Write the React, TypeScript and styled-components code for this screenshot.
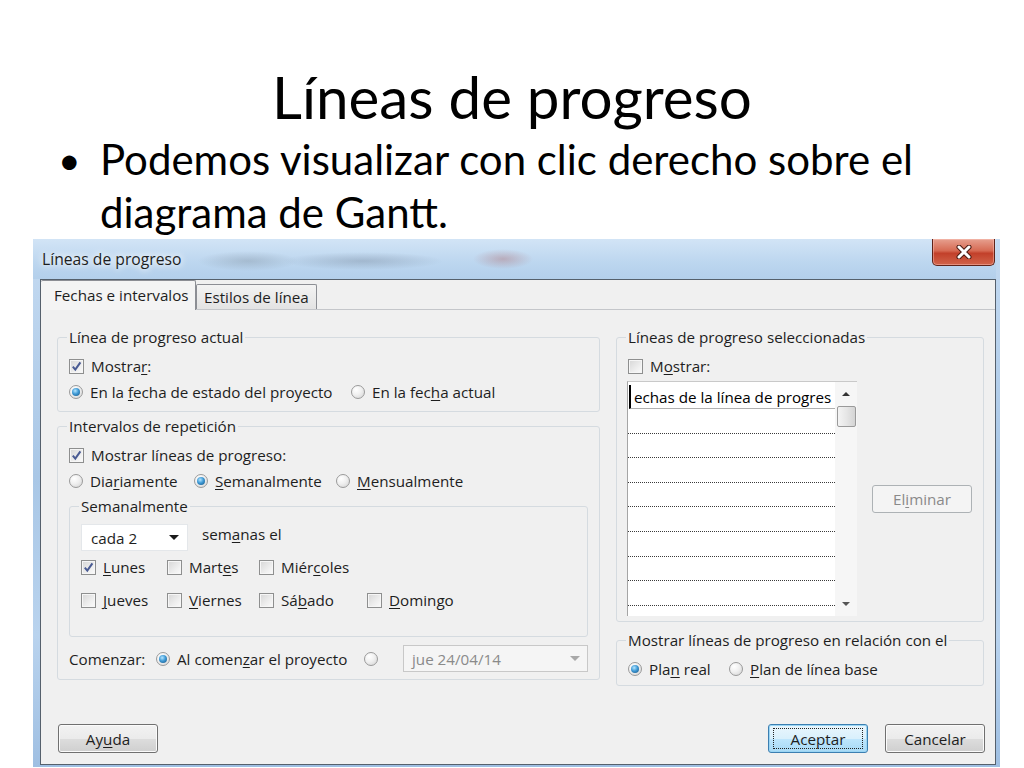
import React from "react";
import styled, {createGlobalStyle, css} from "styled-components";

const GlobalStyle = createGlobalStyle`
  html, body {
    margin: 0;
    padding: 0;
    background: #ffffff;
  }
  body {
    width: 1024px;
    height: 768px;
    overflow: hidden;
    font-family: "Open Sans", "Noto Sans", sans-serif;
  }
`;

const ui = css`
  font-family: "Open Sans", "Noto Sans", sans-serif;
  font-size: 15.2px;
  color: #1e1e1e;
`;

const Chk: React.FC<{on?: boolean}> = ({on}) => (
  <StyledCheckBox>
    {on && (
      <svg width="11" height="11" viewBox="0 0 11 11">
        <path d="M1.8 5.6 L4.3 8.6 L9.4 1.4" fill="none" stroke="#4a5b93" strokeWidth="2" />
      </svg>
    )}
  </StyledCheckBox>
);

const Radio: React.FC<{on?: boolean}> = ({on}) => <StyledRadio $on={on} />;

const ListLines = [0, 1, 2, 3, 4, 5, 6, 7, 8];

const App: React.FC = () => {
  return (
    <>
      <GlobalStyle />
      <StyledSlide>
        <StyledSlideTitle>Líneas de progreso</StyledSlideTitle>
        <StyledBulletItem>
          <StyledBullet>•</StyledBullet>
          <StyledBulletText>
            Podemos visualizar con clic derecho sobre el diagrama de Gantt.
          </StyledBulletText>
        </StyledBulletItem>
      </StyledSlide>

      <StyledDialog>
        <StyledTitleBar>
          <StyledWindowTitle>Líneas de progreso</StyledWindowTitle>
          <StyledCloseButton>
            <svg width="18" height="14" viewBox="0 0 18 14">
              <path
                d="M4 2 L14 12 M14 2 L4 12"
                stroke="#4a1a12"
                strokeWidth="5"
                strokeLinecap="round"
              />
              <path
                d="M4 2 L14 12 M14 2 L4 12"
                stroke="#ffffff"
                strokeWidth="3"
                strokeLinecap="round"
              />
            </svg>
          </StyledCloseButton>
        </StyledTitleBar>

        <StyledClient>
          <StyledTabStrip>
            <StyledTab $active>Fechas e intervalos</StyledTab>
            <StyledTab>Estilos de línea</StyledTab>
          </StyledTabStrip>

          <StyledTabPanel>
            <StyledColumn $gap={4}>
              <StyledGroup $pt={6} $pb={6}>
                <StyledLegend>Línea de progreso actual</StyledLegend>
                <StyledRow>
                  <StyledOption>
                    <Chk on />
                    <span>
                      Mostra<u>r</u>:
                    </span>
                  </StyledOption>
                </StyledRow>
                <StyledRow>
                  <StyledOption $w={282}>
                    <Radio on />
                    <span>
                      En la <u>f</u>echa de estado del proyecto
                    </span>
                  </StyledOption>
                  <StyledOption>
                    <Radio />
                    <span>
                      En la fec<u>h</u>a actual
                    </span>
                  </StyledOption>
                </StyledRow>
              </StyledGroup>

              <StyledGroup $pt={6} $pb={7}>
                <StyledLegend>Intervalos de repetición</StyledLegend>
                <StyledRow>
                  <StyledOption>
                    <Chk on />
                    <span>
                      Mostrar líneas de pro<u>g</u>reso:
                    </span>
                  </StyledOption>
                </StyledRow>
                <StyledRow>
                  <StyledOption $w={125}>
                    <Radio />
                    <span>
                      Dia<u>r</u>iamente
                    </span>
                  </StyledOption>
                  <StyledOption $w={142}>
                    <Radio on />
                    <span>
                      <u>S</u>emanalmente
                    </span>
                  </StyledOption>
                  <StyledOption>
                    <Radio />
                    <span>
                      <u>M</u>ensualmente
                    </span>
                  </StyledOption>
                </StyledRow>

                <StyledInnerGroup $pt={8} $pb={23}>
                  <StyledLegend>Semanalmente</StyledLegend>
                  <StyledComboRow>
                    <StyledCombo>
                      <span>cada 2</span>
                      <StyledArrow />
                    </StyledCombo>
                    <StyledComboLabel>
                      sem<u>a</u>nas el
                    </StyledComboLabel>
                  </StyledComboRow>
                  <StyledDayGrid>
                    <StyledOption>
                      <Chk on />
                      <span>
                        <u>L</u>unes
                      </span>
                    </StyledOption>
                    <StyledOption>
                      <Chk />
                      <span>
                        Mart<u>e</u>s
                      </span>
                    </StyledOption>
                    <StyledOption>
                      <Chk />
                      <span>
                        Miér<u>c</u>oles
                      </span>
                    </StyledOption>
                    <span />
                    <StyledOption>
                      <Chk />
                      <span>
                        <u>J</u>ueves
                      </span>
                    </StyledOption>
                    <StyledOption>
                      <Chk />
                      <span>
                        <u>V</u>iernes
                      </span>
                    </StyledOption>
                    <StyledOption>
                      <Chk />
                      <span>
                        Sá<u>b</u>ado
                      </span>
                    </StyledOption>
                    <StyledOption>
                      <Chk />
                      <span>
                        <u>D</u>omingo
                      </span>
                    </StyledOption>
                  </StyledDayGrid>
                </StyledInnerGroup>

                <StyledStartRow>
                  <StyledOption $w={87}>
                    <span>Comenzar:</span>
                  </StyledOption>
                  <StyledOption $w={208}>
                    <Radio on />
                    <span>
                      Al comen<u>z</u>ar el proyecto
                    </span>
                  </StyledOption>
                  <StyledOption $w={39}>
                    <Radio />
                  </StyledOption>
                  <StyledDateCombo>
                    <span>jue 24/04/14</span>
                    <StyledArrow $disabled />
                  </StyledDateCombo>
                </StyledStartRow>
              </StyledGroup>
            </StyledColumn>

            <StyledColumn $gap={8}>
              <StyledGroup $pt={6} $pb={5}>
                <StyledLegend>Líneas de progreso seleccionadas</StyledLegend>
                <StyledRow>
                  <StyledOption>
                    <Chk />
                    <span>
                      M<u>o</u>strar:
                    </span>
                  </StyledOption>
                </StyledRow>
                <StyledListArea>
                  <StyledListBox>
                    <StyledListRows>
                      <StyledListHead>echas de la línea de progres</StyledListHead>
                      {ListLines.map((n) => (
                        <StyledListRow key={n} />
                      ))}
                    </StyledListRows>
                    <StyledScrollBar>
                      <StyledScrollArrow>
                        <StyledTri $up />
                      </StyledScrollArrow>
                      <StyledThumb />
                      <StyledScrollTrack />
                      <StyledScrollArrow>
                        <StyledTri />
                      </StyledScrollArrow>
                    </StyledScrollBar>
                  </StyledListBox>
                  <StyledButton $kind="disabled" $h={28}>
                    El<u>i</u>minar
                  </StyledButton>
                </StyledListArea>
              </StyledGroup>

              <StyledGroup $pt={6} $pb={3}>
                <StyledLegend>Mostrar líneas de progreso en relación con el</StyledLegend>
                <StyledRow>
                  <StyledOption $w={101}>
                    <Radio on />
                    <span>
                      Pla<u>n</u> real
                    </span>
                  </StyledOption>
                  <StyledOption>
                    <Radio />
                    <span>
                      <u>P</u>lan de línea base
                    </span>
                  </StyledOption>
                </StyledRow>
              </StyledGroup>
            </StyledColumn>
          </StyledTabPanel>

          <StyledFooter>
            <StyledButton>
              Ay<u>u</u>da
            </StyledButton>
            <StyledFooterRight>
              <StyledButton $kind="default">
                <StyledFocus>Aceptar</StyledFocus>
              </StyledButton>
              <StyledButton>Cancelar</StyledButton>
            </StyledFooterRight>
          </StyledFooter>
        </StyledClient>
      </StyledDialog>
    </>
  );
};

export default App;

/* slide */

const StyledSlide = styled.div`
  padding-left: 58px;
  font-family: Lato, "Liberation Sans", sans-serif;
  color: #000;
`;

const StyledSlideTitle = styled.h1`
  margin: 0;
  padding-top: 62px;
  margin-left: -58px;
  height: 68px;
  line-height: 68px;
  text-align: center;
  font-size: 58.3px;
  font-weight: 400;
`;

const StyledBulletItem = styled.div`
  display: flex;
  margin-top: 3px;
  font-size: 42px;
  line-height: 53px;
`;

const StyledBullet = styled.span`
  width: 42px;
  flex: none;
  font-size: 39px;
`;

const StyledBulletText = styled.div`
  width: 880px;
`;

/* dialog frame */

const StyledDialog = styled.div`
  width: 967px;
  height: 528px;
  margin-left: 33px;
  padding: 0 4px 0 7px;
  box-sizing: border-box;
  background: linear-gradient(180deg, #c4daf1 0%, #a9c7e6 45%, #b9d3ee 75%, #9fbfe2 100%);
`;

const StyledTitleBar = styled.div`
  height: 40px;
  margin-left: -7px;
  padding-left: 7px;
  display: flex;
  justify-content: space-between;
  align-items: flex-start;
  background:
    radial-gradient(ellipse 50px 10px at 215px 22px, rgba(120, 135, 150, 0.35), transparent),
    radial-gradient(ellipse 80px 9px at 330px 22px, rgba(110, 125, 145, 0.35), transparent),
    radial-gradient(ellipse 30px 10px at 470px 20px, rgba(170, 90, 90, 0.35), transparent),
    linear-gradient(180deg, #d2e4f6 0%, #bcd6ef 60%, #b3cfeb 100%);
`;

const StyledWindowTitle = styled.div`
  ${ui};
  font-size: 15.7px;
  line-height: 20px;
  padding: 10px 0 0 2px;
  text-shadow: 0 0 6px #ffffff, 0 0 10px #ffffff;
`;

const StyledCloseButton = styled.div`
  width: 63px;
  height: 27px;
  margin-right: 1px;
  box-sizing: border-box;
  display: flex;
  align-items: center;
  justify-content: center;
  border: 1px solid #5f2319;
  border-top: none;
  border-radius: 0 0 5px 5px;
  background: linear-gradient(180deg, #e7a08f 0%, #d66a53 45%, #c2402a 55%, #d1644a 100%);
  box-shadow: inset 0 0 0 1px rgba(255, 200, 190, 0.45);
`;

const StyledClient = styled.div`
  height: 486px;
  box-sizing: border-box;
  border: 1px solid #55606c;
  background: #f0f0f0;
  ${ui};
`;

/* tabs */

const StyledTabStrip = styled.div`
  height: 29px;
  display: flex;
  align-items: flex-end;
  position: relative;
  z-index: 1;
`;

const StyledTab = styled.div<{$active?: boolean}>`
  box-sizing: border-box;
  padding: 0 7px;
  border: 1px solid #8c8e94;
  border-bottom: none;
  border-radius: 2px 2px 0 0;
  line-height: 24px;
  height: 25px;
  background: linear-gradient(180deg, #f3f3f3, #e3e3e3);
  white-space: nowrap;
  ${(p) =>
    p.$active &&
    css`
      width: 155px;
      height: 30px;
      margin-bottom: -1px;
      padding: 0 13px;
      line-height: 28px;
      border-left: none;
      background: #f4f4f4;
    `}
`;

const StyledTabPanel = styled.div`
  display: grid;
  grid-template-columns: 543px 368px;
  column-gap: 16px;
  align-items: start;
  padding: 17px 11px 25px 16px;
  border-top: 1px solid #c4c6ca;
`;

const StyledColumn = styled.div<{$gap: number}>`
  display: flex;
  flex-direction: column;
  gap: ${(p) => p.$gap}px;
`;

const StyledGroup = styled.fieldset<{$pt: number; $pb: number}>`
  margin: 0;
  min-width: 0;
  padding: ${(p) => p.$pt}px 11px ${(p) => p.$pb}px;
  border: 1px solid #d5dbe0;
  border-radius: 3px;
`;

const StyledInnerGroup = styled(StyledGroup)`
  margin-top: 2px;
`;

const StyledLegend = styled.legend`
  padding: 0 2px;
  margin-left: -2px;
  line-height: 20px;
  height: 20px;
`;

const StyledRow = styled.div`
  display: flex;
  align-items: center;
  height: 26px;
  white-space: nowrap;
`;

const StyledOption = styled.label<{$w?: number}>`
  display: inline-flex;
  align-items: center;
  gap: 7px;
  white-space: nowrap;
  ${(p) => p.$w && `width: ${p.$w}px; flex: none;`}

  u {
    text-decoration-thickness: 1px;
    text-underline-offset: 2px;
  }
`;

const StyledCheckBox = styled.span`
  width: 15px;
  height: 15px;
  box-sizing: border-box;
  flex: none;
  display: flex;
  align-items: center;
  justify-content: center;
  border: 1px solid #8e8f8f;
  background: linear-gradient(135deg, #d6d6d6 0%, #eeeeee 60%, #fbfbfb 100%);
  box-shadow: inset 0 0 0 1px #f6f6f6;
`;

const StyledRadio = styled.span<{$on?: boolean}>`
  width: 14px;
  height: 14px;
  box-sizing: border-box;
  flex: none;
  border-radius: 50%;
  border: 1px solid #9a9a9a;
  background: radial-gradient(circle at 35% 30%, #ffffff 0%, #f0f0f0 45%, #d2d2d2 100%);
  display: flex;
  align-items: center;
  justify-content: center;

  &::after {
    content: "";
    width: 8px;
    height: 8px;
    border-radius: 50%;
    display: ${(p) => (p.$on ? "block" : "none")};
    background: radial-gradient(circle at 40% 35%, #b6e6ff 0%, #3f9ad6 45%, #16527f 100%);
  }
`;

const StyledComboRow = styled.div`
  display: flex;
  align-items: flex-start;
  gap: 14px;
`;

const StyledCombo = styled.div`
  width: 107px;
  height: 27px;
  box-sizing: border-box;
  padding: 0 8px 0 9px;
  display: flex;
  align-items: center;
  justify-content: space-between;
  background: #ffffff;
  border: 1px solid #e4e7ea;
`;

const StyledComboLabel = styled.span`
  line-height: 20px;

  u {
    text-decoration-thickness: 1px;
    text-underline-offset: 2px;
  }
`;

const StyledArrow = styled.span<{$disabled?: boolean}>`
  width: 0;
  height: 0;
  border-left: 5px solid transparent;
  border-right: 5px solid transparent;
  border-top: 5px solid ${(p) => (p.$disabled ? "#a8a8a8" : "#1a1a1a")};
`;

const StyledDayGrid = styled.div`
  display: grid;
  grid-template-columns: 86px 92px 108px auto;
  grid-auto-rows: 26px;
  row-gap: 7px;
  align-items: center;
  margin-top: 3px;
`;

const StyledStartRow = styled.div`
  display: flex;
  align-items: center;
  height: 27px;
  margin-top: 8px;
`;

const StyledDateCombo = styled.div`
  width: 187px;
  height: 27px;
  box-sizing: border-box;
  padding: 0 7px 0 8px;
  display: flex;
  align-items: center;
  justify-content: space-between;
  border: 1px solid #c8c8c8;
  background: #f5f5f5;
  color: #8a8a8a;
`;

/* right column list */

const StyledListArea = styled.div`
  display: flex;
  align-items: flex-start;
  gap: 15px;
  margin-top: 2px;

  & > button {
    margin-top: 104px;
  }
`;

const StyledListBox = styled.div`
  width: 230px;
  height: 235px;
  box-sizing: border-box;
  display: flex;
  background: #ffffff;
  border-left: 1px solid #a5a5a5;
  border-top: 1px solid #c9c9c9;
  margin-left: -1px;
`;

const StyledListRows = styled.div`
  flex: 1;
  min-width: 0;
  overflow: hidden;
`;

const StyledListHead = styled.div`
  box-sizing: border-box;
  padding-left: 3px;
  line-height: 24px;
  white-space: nowrap;
  border-left: 2px solid #000;
  border-bottom: 1px solid #b0b0b0;
  margin: 3px 0 0 1px;
  height: 24px;
  color: #000;
`;

const StyledListRow = styled.div`
  height: 24.6px;
  box-sizing: border-box;
  border-bottom: 1px dotted #3a3a3a;
`;

const StyledScrollBar = styled.div`
  width: 22px;
  flex: none;
  display: flex;
  flex-direction: column;
  align-items: center;
  background: #f6f6f6;
`;

const StyledScrollArrow = styled.div`
  height: 24px;
  width: 100%;
  display: flex;
  align-items: center;
  justify-content: center;
`;

const StyledTri = styled.span<{$up?: boolean}>`
  width: 0;
  height: 0;
  border-left: 4px solid transparent;
  border-right: 4px solid transparent;
  ${(p) =>
    p.$up ? "border-bottom: 4px solid #333;" : "border-top: 4px solid #555;"}
`;

const StyledThumb = styled.div`
  width: 19px;
  height: 21px;
  box-sizing: border-box;
  border: 1px solid #9a9a9a;
  border-radius: 2px;
  background: linear-gradient(90deg, #f4f4f4 0%, #e6e6e6 50%, #d4d4d4 100%);
`;

const StyledScrollTrack = styled.div`
  flex: 1;
`;

/* buttons */

const StyledButton = styled.button<{$kind?: "default" | "disabled"; $h?: number}>`
  ${ui};
  width: 100px;
  height: ${(p) => p.$h || 29}px;
  flex: none;
  padding: 0;
  box-sizing: border-box;
  border: 1px solid #707070;
  border-radius: 3px;
  background: linear-gradient(180deg, #f2f2f2 0%, #ebebeb 50%, #dddddd 51%, #cfcfcf 100%);
  box-shadow: inset 0 0 0 1px #fbfbfb;
  display: flex;
  align-items: center;
  justify-content: center;

  u {
    text-decoration-thickness: 1px;
    text-underline-offset: 2px;
  }

  ${(p) =>
    p.$kind === "disabled" &&
    css`
      border-color: #adb2b5;
      background: #f4f4f4;
      color: #8a8a8a;
      box-shadow: none;
    `}

  ${(p) =>
    p.$kind === "default" &&
    css`
      border-color: #3c7fb1;
      background: linear-gradient(180deg, #eaf6fd 0%, #d9f0fc 50%, #bee6fd 51%, #a7d9f5 100%);
      box-shadow: inset 0 0 0 1px #9ad5f4;
    `}
`;

const StyledFocus = styled.span`
  width: 90px;
  height: 21px;
  box-sizing: border-box;
  border: 1px dotted #222;
  display: flex;
  align-items: center;
  justify-content: center;
`;

const StyledFooter = styled.div`
  display: flex;
  justify-content: space-between;
  padding: 13px 10px 0 17px;
`;

const StyledFooterRight = styled.div`
  display: flex;
  gap: 17px;
`;
